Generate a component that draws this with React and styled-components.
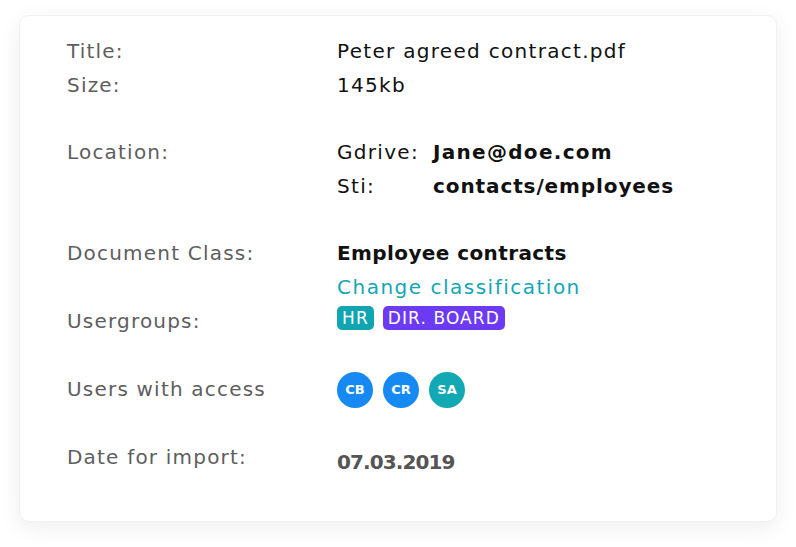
import React from "react";
import styled, { createGlobalStyle } from "styled-components";

const GlobalStyle = createGlobalStyle`
  html, body {
    margin: 0;
    padding: 0;
    background: #ffffff;
  }
  body {
    font-family: "DejaVu Sans", "Open Sans", sans-serif;
  }
`;

const Page = styled.div`
  width: 796px;
  height: 547px;
  box-sizing: border-box;
  padding: 15px 19px;
`;

const Card = styled.div`
  width: 758px;
  height: 507px;
  box-sizing: border-box;
  padding: 18px 47px 0;
  background: #ffffff;
  border: 1px solid #f1f1f1;
  border-radius: 10px;
  box-shadow: 0 6px 22px rgba(0, 0, 0, 0.07);
`;

const Row = styled.div`
  display: grid;
  grid-template-columns: 270px 1fr;
  margin-top: ${(p) => p.gap || 0}px;
  line-height: 34px;
  font-size: 20px;
  letter-spacing: 1.2px;
`;

const Label = styled.div`
  color: #5e5e5e;
`;

const Value = styled.div`
  color: #111111;
  font-weight: ${(p) => (p.bold ? 700 : 400)};
  letter-spacing: ${(p) => (p.bold ? "0.4px" : "1.3px")};
`;

const Location = styled.div`
  display: grid;
  grid-template-columns: 96px 1fr;
`;

const Path = styled.div`
  color: #111111;
  font-weight: 700;
  letter-spacing: ${(p) => p.spacing}px;
`;

const Link = styled.div`
  color: #12a6b4;
  letter-spacing: 1.5px;
`;

const Tags = styled.div`
  display: flex;
  align-items: center;
  gap: 9px;
  height: 34px;
  margin-top: -3px;
`;

const Tag = styled.span`
  display: inline-flex;
  align-items: center;
  height: 24px;
  padding: 0 5px;
  border-radius: 5px;
  font-size: 17px;
  letter-spacing: 1.1px;
  color: #ffffff;
  background: ${(p) => p.color};
`;

const Avatars = styled.div`
  display: flex;
  align-items: center;
  gap: 10px;
  height: 34px;
  margin-top: 1px;
`;

const Avatar = styled.span`
  display: inline-flex;
  align-items: center;
  justify-content: center;
  width: 36px;
  height: 36px;
  border-radius: 50%;
  font-size: 13px;
  font-weight: 700;
  letter-spacing: 0;
  color: #ffffff;
  background: ${(p) => p.color};
`;

const DateValue = styled.div`
  padding-top: 5px;
  font-size: 20px;
  font-weight: 700;
  letter-spacing: -0.9px;
  color: #555555;
`;

export default function App() {
  return (
    <>
      <GlobalStyle />
      <Page>
        <Card>
          <Row>
            <Label>Title:</Label>
            <Value>Peter agreed contract.pdf</Value>
          </Row>
          <Row>
            <Label>Size:</Label>
            <Value>145kb</Value>
          </Row>
          <Row gap={33}>
            <Label>Location:</Label>
            <Location>
              <Value>Gdrive:</Value>
              <Path spacing={1.3}>Jane@doe.com</Path>
              <Value>Sti:</Value>
              <Path spacing={0.9}>contacts/employees</Path>
            </Location>
          </Row>
          <Row gap={33}>
            <Label>Document Class:</Label>
            <div>
              <Value bold>Employee contracts</Value>
              <Link>Change classification</Link>
            </div>
          </Row>
          <Row>
            <Label>Usergroups:</Label>
            <Tags>
              <Tag color="#10a5b1">HR</Tag>
              <Tag color="#6b3af2">DIR. BOARD</Tag>
            </Tags>
          </Row>
          <Row gap={34}>
            <Label>Users with access</Label>
            <Avatars>
              <Avatar color="#1689f2">CB</Avatar>
              <Avatar color="#1689f2">CR</Avatar>
              <Avatar color="#12a8b4">SA</Avatar>
            </Avatars>
          </Row>
          <Row gap={33}>
            <Label>Date for import:</Label>
            <DateValue>07.03.2019</DateValue>
          </Row>
        </Card>
      </Page>
    </>
  );
}
